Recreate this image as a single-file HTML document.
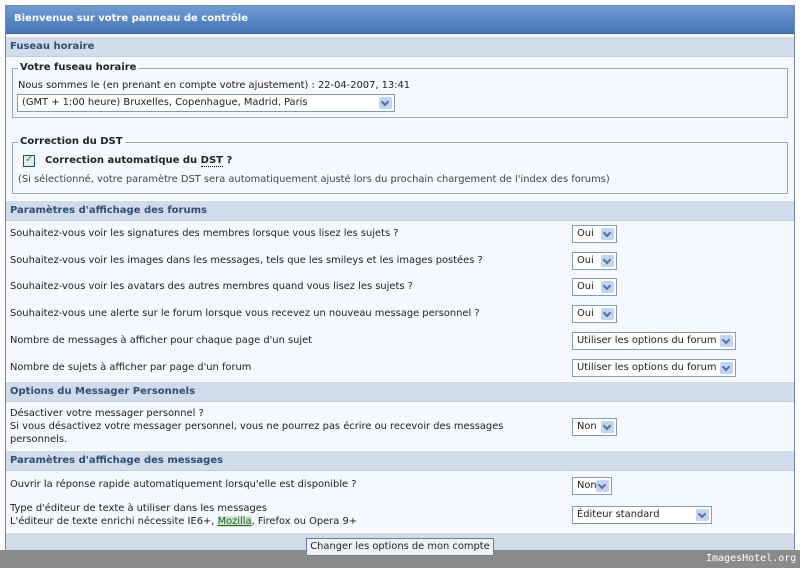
<!DOCTYPE html>
<html><head><meta charset="utf-8"><style>
*{margin:0;padding:0;box-sizing:border-box}
body{width:800px;height:568px;background:#fff;position:relative;overflow:hidden;font-family:"DejaVu Sans","Liberation Sans",sans-serif;font-size:9.9px;color:#222}
.a{position:absolute;white-space:nowrap}
#wrap{position:absolute;left:5px;top:5px;width:790px;height:546px;border:1px solid #6d87a8;background:#f5f8fc}
.hd{position:absolute;left:6px;top:6px;width:788px;height:28px;background:linear-gradient(#6f9bd3,#4675b8);border-bottom:1px solid #3a63a0}
.hd span{position:absolute;left:8px;top:7px;color:#fff;font-weight:bold;font-size:10px}
.sec{position:absolute;left:6px;width:788px;height:21px;background:#d1dcea;border-top:1px solid #fff;border-bottom:1px solid #c0cedf}
.sec span{position:absolute;left:4px;top:4px;font-weight:bold;color:#2c4d76;font-size:10px}
.fs{position:absolute;border:1px solid #9aa8b8;}
.lg{position:absolute;background:#f5f8fc;font-weight:bold;padding:0 2px;font-size:10px}
.sel{position:absolute;height:18px;background:#fff;border:1px solid #7f9db9}
.sel span{position:absolute;left:4px;top:2px}
.sel i{position:absolute;right:2px;top:2px;width:13px;height:12px;background:#c4d3f0;border-radius:2px}
.sel i:after{content:"";position:absolute;left:3px;top:2px;width:4px;height:4px;border-right:2px solid #4d6fb0;border-bottom:2px solid #4d6fb0;transform:rotate(45deg)}
</style></head><body>
<div id="wrap"></div>
<div class="hd"><span>Bienvenue sur votre panneau de contrôle</span></div>
<div class="sec" style="top:36px"><span>Fuseau horaire</span></div>

<div class="fs" style="left:12px;top:68px;width:776px;height:50px"></div>
<div class="lg a" style="left:18px;top:62px">Votre fuseau horaire</div>
<div class="a" style="left:18px;top:80px">Nous sommes le (en prenant en compte votre ajustement) : 22-04-2007, 13:41</div>
<div class="sel" style="left:17px;top:94px;width:378px"><span>(GMT + 1:00 heure) Bruxelles, Copenhague, Madrid, Paris</span><i></i></div>

<div class="fs" style="left:12px;top:142px;width:776px;height:52px"></div>
<div class="lg a" style="left:18px;top:136px">Correction du DST</div>
<div class="a" style="left:23px;top:155px;width:12px;height:12px;border:1px solid #1c5180;background:#e6eee6"></div>
<div class="a" style="left:25px;top:154px;color:#21a121;font-size:10px">✓</div>
<div class="a" style="left:45px;top:155px;font-weight:bold;font-size:10px">Correction automatique du <span style="border-bottom:1px dotted #000">DST</span> ?</div>
<div class="a" style="left:18px;top:174px;color:#444">(Si sélectionné, votre paramètre DST sera automatiquement ajusté lors du prochain chargement de l'index des forums)</div>

<div class="sec" style="top:200px"><span>Paramètres d'affichage des forums</span></div>
<div class="a" style="left:10px;top:228px">Souhaitez-vous voir les signatures des membres lorsque vous lisez les sujets ?</div>
<div class="sel" style="left:572px;top:225px;width:45px"><span>Oui</span><i></i></div>
<div class="a" style="left:10px;top:255px">Souhaitez-vous voir les images dans les messages, tels que les smileys et les images postées ?</div>
<div class="sel" style="left:572px;top:252px;width:45px"><span>Oui</span><i></i></div>
<div class="a" style="left:10px;top:281px">Souhaitez-vous voir les avatars des autres membres quand vous lisez les sujets ?</div>
<div class="sel" style="left:572px;top:278px;width:45px"><span>Oui</span><i></i></div>
<div class="a" style="left:10px;top:308px">Souhaitez-vous une alerte sur le forum lorsque vous recevez un nouveau message personnel ?</div>
<div class="sel" style="left:572px;top:305px;width:45px"><span>Oui</span><i></i></div>
<div class="a" style="left:10px;top:335px">Nombre de messages à afficher pour chaque page d'un sujet</div>
<div class="sel" style="left:572px;top:332px;width:164px"><span>Utiliser les options du forum</span><i></i></div>
<div class="a" style="left:10px;top:362px">Nombre de sujets à afficher par page d'un forum</div>
<div class="sel" style="left:572px;top:359px;width:164px"><span>Utiliser les options du forum</span><i></i></div>

<div class="sec" style="top:381px"><span>Options du Messager Personnels</span></div>
<div class="a" style="left:10px;top:407px;line-height:13px">Désactiver votre messager personnel ?<br>Si vous désactivez votre messager personnel, vous ne pourrez pas écrire ou recevoir des messages<br>personnels.</div>
<div class="sel" style="left:572px;top:418px;width:45px"><span>Non</span><i></i></div>

<div class="sec" style="top:450px"><span>Paramètres d'affichage des messages</span></div>
<div class="a" style="left:10px;top:479px">Ouvrir la réponse rapide automatiquement lorsqu'elle est disponible ?</div>
<div class="sel" style="left:572px;top:477px;width:40px"><span>Non</span><i></i></div>
<div class="a" style="left:10px;top:502px;line-height:13px">Type d'éditeur de texte à utiliser dans les messages<br>L'éditeur de texte enrichi nécessite IE6+, <span style="color:#2a5d2a;text-decoration:underline;background:#cfe8cf">Mozilla</span>, Firefox ou Opera 9+</div>
<div class="sel" style="left:572px;top:506px;width:140px"><span>Éditeur standard</span><i></i></div>

<div class="sec" style="top:532px;height:20px"></div>
<div class="a" style="left:0;top:550px;width:800px;height:18px;background:#8a8a8a"></div>
<div class="a" style="left:306px;top:538px;width:188px;height:18px;border:1px solid #6d7c8f;background:#eef2f7;text-align:center;padding-top:2px">Changer les options de mon compte</div>
<div class="a" style="left:706px;top:553px;color:#fff;font-family:'DejaVu Sans Mono',monospace;font-size:10px">ImagesHotel.org</div>
</body></html>
